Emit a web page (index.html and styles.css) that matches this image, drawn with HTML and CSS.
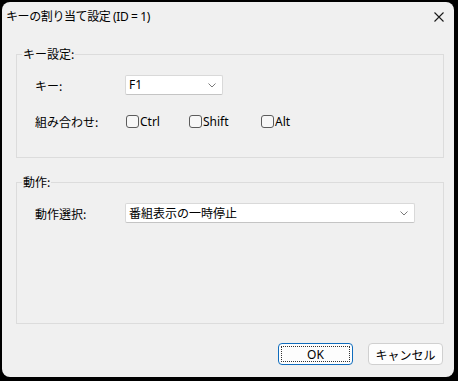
FILE: index.html
```html
<!DOCTYPE html>
<html lang="ja">
<head>
    <meta charset="UTF-8">
    <title>キーの割り当て設定</title>
    <link rel="stylesheet" href="styles.css">
</head>
<body>
    <div class="window">
        <div class="titlebar">
            <span class="title">キーの割り当て設定 (ID = 1)</span>
            <svg class="close" width="10" height="10" viewBox="0 0 10 10">
                <path d="M0.5 0.5 L9.5 9.5 M9.5 0.5 L0.5 9.5" stroke="#1a1a1a" stroke-width="1.1" fill="none"/>
            </svg>
        </div>

        <div class="content">
            <fieldset class="group group-key">
                <legend>キー設定:</legend>
                <div class="row">
                    <label class="row-label">キー:</label>
                    <div class="combo combo-key">
                        <span>F1</span>
                        <svg width="8" height="5" viewBox="0 0 8 5"><path d="M0.5 0.5 L4 4 L7.5 0.5" stroke="#7a7a7a" fill="none"/></svg>
                    </div>
                </div>
                <div class="row row-mods">
                    <label class="row-label">組み合わせ:</label>
                    <label class="check check-ctrl"><input type="checkbox"><span>Ctrl</span></label>
                    <label class="check check-shift"><input type="checkbox"><span>Shift</span></label>
                    <label class="check"><input type="checkbox"><span>Alt</span></label>
                </div>
            </fieldset>

            <fieldset class="group group-action">
                <legend>動作:</legend>
                <div class="row">
                    <label class="row-label">動作選択:</label>
                    <div class="combo combo-action">
                        <span>番組表示の一時停止</span>
                        <svg width="8" height="5" viewBox="0 0 8 5"><path d="M0.5 0.5 L4 4 L7.5 0.5" stroke="#7a7a7a" fill="none"/></svg>
                    </div>
                </div>
            </fieldset>

            <div class="buttons">
                <button class="btn btn-default"><span>OK</span></button>
                <button class="btn">キャンセル</button>
            </div>
        </div>
    </div>
</body>
</html>
```

FILE: styles.css
```css
html, body {
    margin: 0;
    background: #000;
}

body {
    padding: 2px 0 0 2px;
    font-family: "Noto Sans", "Noto Sans CJK JP", sans-serif;
    font-size: 12px;
    color: #000;
}

.window {
    width: 452px;
    height: 375px;
    background: #f0f0f0;
    border-radius: 8px;
    display: flex;
    flex-direction: column;
}

.titlebar {
    height: 30px;
    display: flex;
    align-items: center;
    justify-content: space-between;
    padding: 0 10px 0 4px;
}

.title {
    font-size: 12px;
    line-height: 16px;
    letter-spacing: -0.4px;
}

.content {
    padding: 14px 10px 0 14px;
}

.group {
    margin: 0;
    border: 1px solid #dcdcdc;
    padding: 13px 0 0 5px;
    box-sizing: border-box;
}

.group legend {
    padding: 0 1px;
    line-height: 16px;
    font-family: "Noto Sans CJK JP", sans-serif;
}

.group-key {
    height: 112px;
}

.group-action {
    height: 150px;
    margin-top: 16px;
}

.row {
    display: flex;
    align-items: center;
    height: 20px;
    margin-left: 13px;
}

.row-mods {
    margin-top: 16px;
}

.row-label {
    width: 90px;
    font-family: "Noto Sans CJK JP", sans-serif;
}

.combo {
    height: 20px;
    box-sizing: border-box;
    background: #fff;
    border: 1px solid #d9d9d9;
    border-bottom-color: #c4c4c4;
    border-radius: 2px;
    display: flex;
    align-items: center;
    justify-content: space-between;
    padding: 0 6px 0 3px;
}

.combo span {
    line-height: 16px;
}

.combo-key {
    width: 98px;
}

.combo-action {
    width: 290px;
    font-family: "Noto Sans CJK JP", sans-serif;
}

.check {
    display: flex;
    align-items: center;
    margin-left: 1px;
}

.check-ctrl {
    width: 62px;
}

.check-shift {
    width: 71px;
}

.check input {
    appearance: none;
    width: 13px;
    height: 13px;
    margin: 0 1px 0 0;
    border: 1px solid #5c5c5c;
    border-radius: 3px;
    background: #f7f7f7;
}

.buttons {
    display: flex;
    justify-content: flex-end;
    gap: 15px;
    margin: 19px 1px 0 0;
}

.btn {
    width: 75px;
    height: 22px;
    padding: 0;
    background: #fdfdfd;
    border: 1px solid #d0d0d0;
    border-radius: 4px;
    font-family: "Noto Sans CJK JP", sans-serif;
    font-size: 12px;
    color: #000;
}

.btn-default {
    border-color: #0f6cbd;
    padding: 2px;
    font-family: "Noto Sans", sans-serif;
}

.btn-default span {
    display: flex;
    align-items: center;
    justify-content: center;
    height: 100%;
    border: 1px dotted #333;
    box-sizing: border-box;
}
```
